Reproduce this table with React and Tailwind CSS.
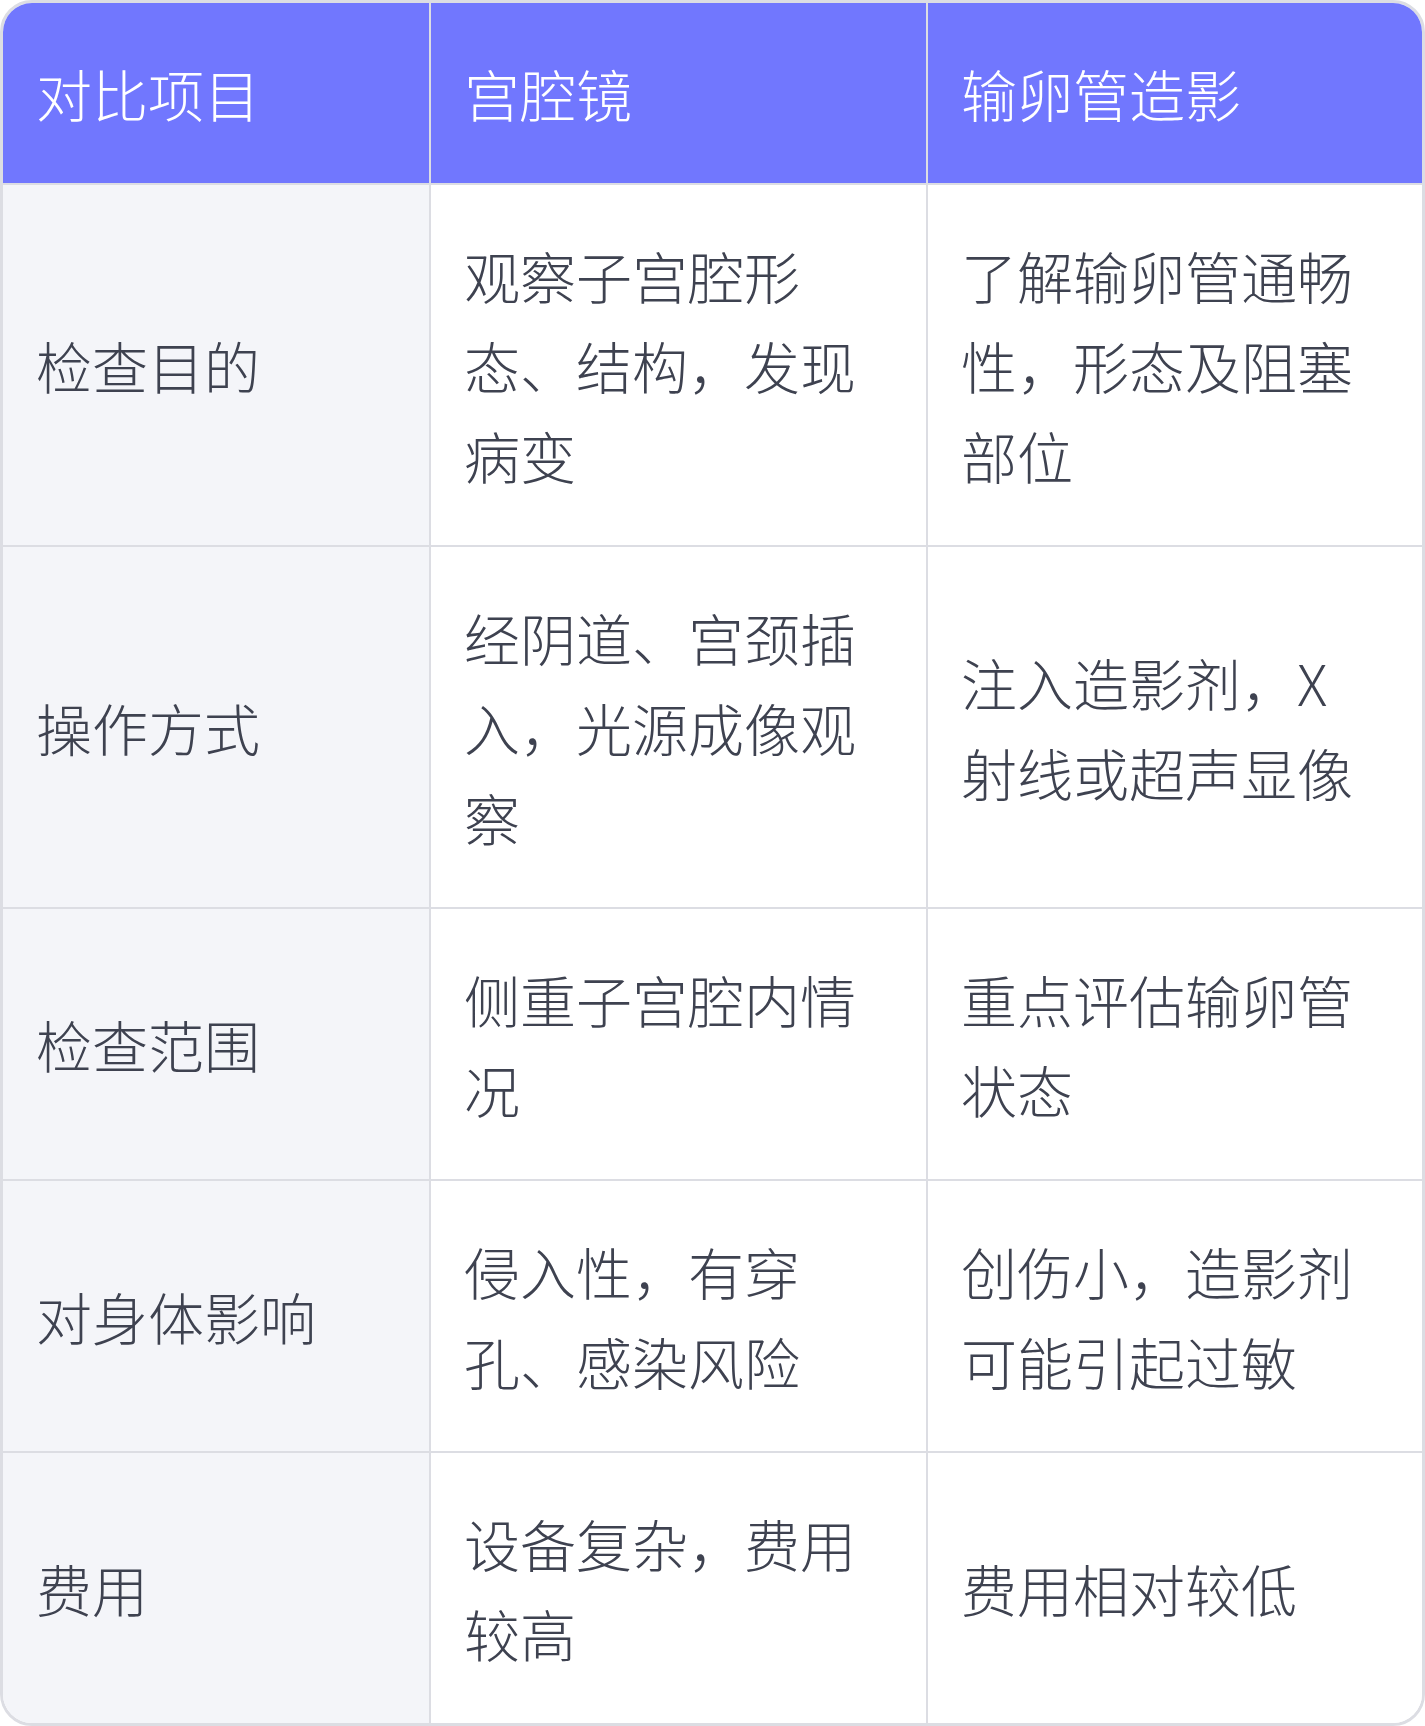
const headers = ["对比项目", "宫腔镜", "输卵管造影"];

const rows = [
  ["检查目的", "观察子宫腔形态、结构，发现病变", "了解输卵管通畅性，形态及阻塞部位"],
  ["操作方式", "经阴道、宫颈插入，光源成像观察", "注入造影剂，X射线或超声显像"],
  ["检查范围", "侧重子宫腔内情况", "重点评估输卵管状态"],
  ["对身体影响", "侵入性，有穿孔、感染风险", "创伤小，造影剂可能引起过敏"],
  ["费用", "设备复杂，费用较高", "费用相对较低"],
];

function App() {
  return (
    <div
      className="w-[1425px] overflow-hidden rounded-[32px] border-[3px] border-[#dcdde3] bg-white text-[56px] leading-[90px] text-[#3e4250]"
      style={{ fontFamily: '"Noto Sans CJK SC", "Noto Sans", sans-serif' }}
    >
      <table className="w-full table-fixed border-separate border-spacing-0">
        <colgroup>
          <col className="w-[426px]" />
          <col className="w-[497px]" />
          <col />
        </colgroup>
        <thead>
          <tr>
            {headers.map((h, i) => (
              <th
                key={h}
                className={
                  i === 0
                    ? "bg-[#7177fe] pl-[33px] pr-[20px] py-[45px] text-left font-light text-white"
                    : "border-l-2 border-[#dcdde3] bg-[#7177fe] pl-[33px] pr-[44px] py-[45px] text-left font-light text-white"
                }
              >
                {h}
              </th>
            ))}
          </tr>
        </thead>
        <tbody>
          {rows.map((row) => (
            <tr key={row[0]}>
              <td className="border-t-2 border-[#dcdde3] bg-[#f4f5f9] pl-[33px] pr-[20px] py-[45px] align-middle font-light">
                {row[0]}
              </td>
              <td className="border-l-2 border-t-2 border-[#dcdde3] bg-white pl-[33px] pr-[44px] py-[45px] align-middle font-light">
                {row[1]}
              </td>
              <td className="border-l-2 border-t-2 border-[#dcdde3] bg-white pl-[33px] pr-[44px] py-[45px] align-middle font-light">
                {row[2]}
              </td>
            </tr>
          ))}
        </tbody>
      </table>
    </div>
  );
}

export default App;
